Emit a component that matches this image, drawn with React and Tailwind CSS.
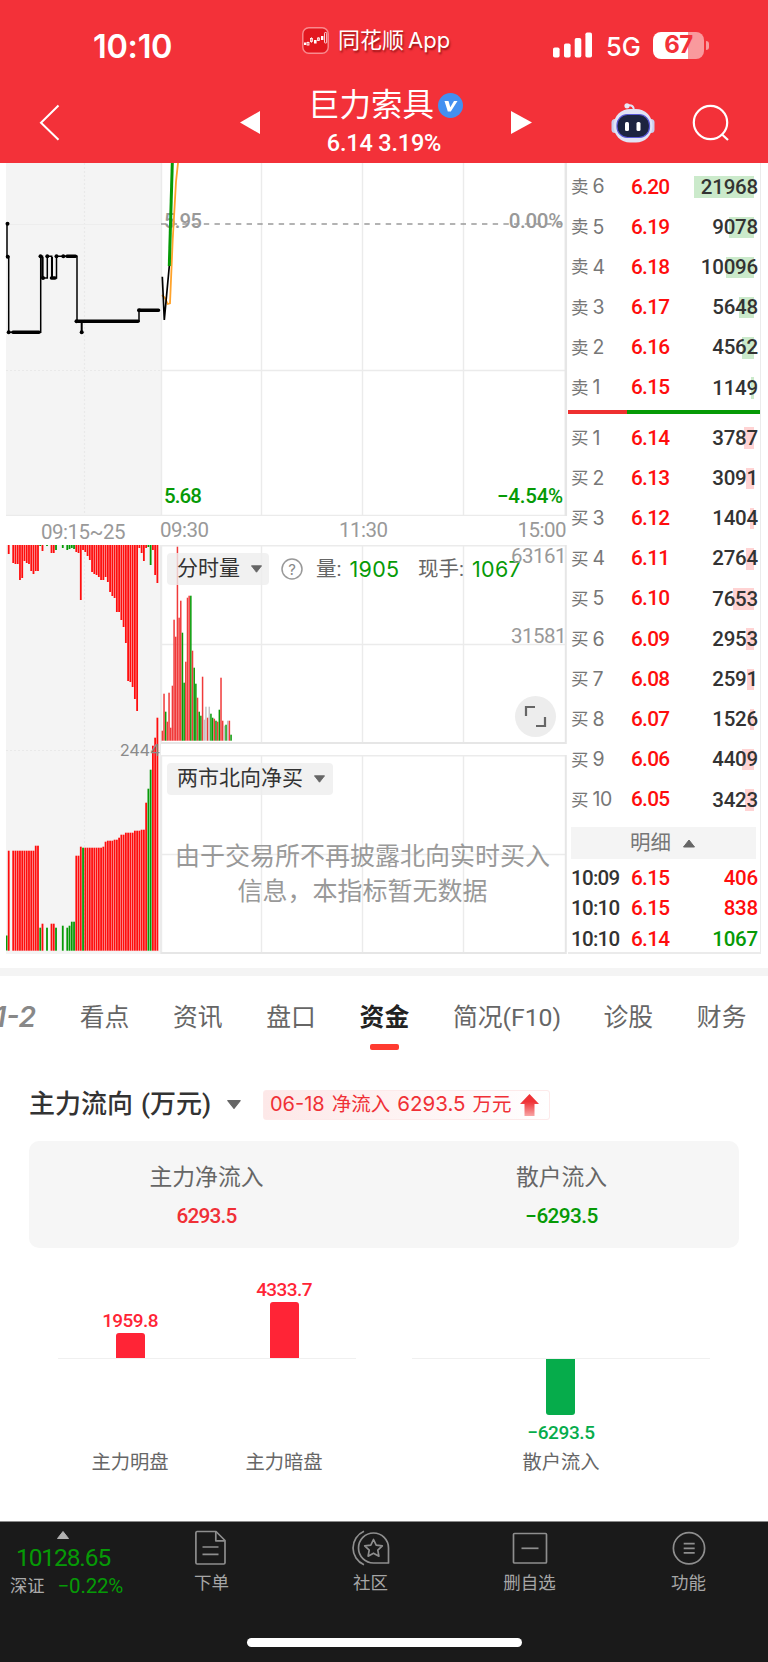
const asks = [
  { label: '卖', level: 6, price: '6.20', qty: 21968 },
  { label: '卖', level: 5, price: '6.19', qty: 9078 },
  { label: '卖', level: 4, price: '6.18', qty: 10096 },
  { label: '卖', level: 3, price: '6.17', qty: 5648 },
  { label: '卖', level: 2, price: '6.16', qty: 4562 },
  { label: '卖', level: 1, price: '6.15', qty: 1149 }
]

const bids = [
  { label: '买', level: 1, price: '6.14', qty: 3787 },
  { label: '买', level: 2, price: '6.13', qty: 3091 },
  { label: '买', level: 3, price: '6.12', qty: 1404 },
  { label: '买', level: 4, price: '6.11', qty: 2764 },
  { label: '买', level: 5, price: '6.10', qty: 7653 },
  { label: '买', level: 6, price: '6.09', qty: 2953 },
  { label: '买', level: 7, price: '6.08', qty: 2591 },
  { label: '买', level: 8, price: '6.07', qty: 1526 },
  { label: '买', level: 9, price: '6.06', qty: 4409 },
  { label: '买', level: 10, price: '6.05', qty: 3423 }
]

const trades = [
  { time: '10:09', price: '6.15', qty: 406, up: true },
  { time: '10:10', price: '6.15', qty: 838, up: true },
  { time: '10:10', price: '6.14', qty: 1067, up: false }
]

const RED = '#ff0d0d'
const GREEN = '#069a06'

// Call auction: [slot, unmatched height, matched height, colour]
const auctionBars = [
  [0, 9, 100, 'r'],
  [2, 18, 100, 'r'], [3, 19, 100, 'r'], [4, 19, 100, 'r'], [5, 35, 100, 'r'],
  [6, 33, 100, 'r'], [7, 16, 100, 'r'], [8, 18, 100, 'r'], [9, 19, 100, 'r'],
  [10, 26, 100, 'r'], [11, 29, 100, 'r'], [12, 26, 105, 'r'], [13, 26, 105, 'r'],
  [14, 1, 23, 'g'], [15, 6, 27, 'r'], [17, 1, 23, 'g'], [19, 8, 27, 'r'],
  [20, 8, 27, 'r'], [21, 5, 23, 'g'], [24, 3, 25, 'g'], [26, 5, 23, 'g'],
  [27, 4, 25, 'g'], [28, 3, 29, 'g'], [29, 4, 29, 'g'], [30, 7, 95, 'r'],
  [31, 8, 95, 'r'], [32, 55, 104, 'r'], [33, 5, 103, 'x'], [34, 7, 103, 'r'],
  [35, 11, 103, 'r'], [36, 15, 103, 'r'], [37, 27, 103, 'r'], [38, 29, 103, 'r'],
  [39, 30, 103, 'r'], [40, 32, 103, 'r'], [41, 35, 103, 'r'], [42, 35, 104, 'r'],
  [43, 32, 109, 'r'], [44, 37, 110, 'r'], [45, 47, 110, 'r'], [46, 51, 110, 'r'],
  [47, 53, 111, 'r'], [48, 67, 111, 'r'], [49, 67, 113, 'r'], [50, 75, 116, 'r'],
  [51, 82, 116, 'r'], [52, 98, 118, 'r'], [53, 136, 118, 'r'], [54, 137, 118, 'r'],
  [55, 142, 118, 'r'], [56, 154, 120, 'r'], [57, 166, 120, 'r'], [58, 3, 120, 'r'],
  [59, 8, 121, 'r'], [60, 16, 121, 'r'], [61, 3, 148, 'r'], [62, 2, 162, 'g'],
  [63, 20, 181, 'g'], [64, 5, 205, 'r'], [65, 30, 213, 'r'], [66, 38, 233, 'r']
]

const volumeBars = [
  [10, 'r'], [47, 'r'], [29, 'g'], [19, 'r'], [48, 'r'], [13, 'r'], [55, 'r'],
  [121, 'r'], [104, 'r'], [194, 'r'], [123, 'r'], [140, 'r'], [108, 'g'], [58, 'g'],
  [79, 'r'], [143, 'r'], [145, 'r'], [145, 'g'], [90, 'r'], [73, 'g'], [57, 'g'],
  [43, 'r'], [29, 'g'], [25, 'g'], [64, 'r'], [21, 'n'], [34, 'n'], [23, 'r'],
  [34, 'n'], [27, 'g'], [23, 'g'], [22, 'r'], [20, 'g'], [19, 'r'], [31, 'g'],
  [63, 'r'], [20, 'r'], [15, 'n'], [16, 'g'], [20, 'n'], [20, 'r'], [6, 'g']
]

const volumeColor = { r: '#f03a3a', g: '#069a06', n: '#c4c4c4' }

const Caret = ({ className }) => (
  <svg viewBox="0 0 12 8" className={className}>
    <path d="M0.5 0.5h11L6 7.5z" fill="currentColor" stroke="currentColor" strokeLinejoin="round" />
  </svg>
)

const StatusBar = () => (
  <div className="flex h-[82px] items-center pl-[93px] pr-[56px] pt-[8px] text-white">
    <div className="w-[209px] pt-[4px] font-['Inter',sans-serif] text-[32.5px] font-semibold tracking-[-0.3px]">10:10</div>
    <div className="flex w-[251px] items-center gap-[9px] pb-[9px]">
      <svg width="27" height="27" viewBox="0 0 27 27">
        <rect x="0.8" y="0.8" width="25.4" height="25.4" rx="6" fill="#e2171f" stroke="#f98a8e" strokeWidth="1.4" />
        <g fill="none" stroke="#fff" strokeWidth="0.8">
          <path d="M6 14.5v4M9.5 10v6M16.5 10v4" opacity="0.7" />
          <rect x="5" y="15.5" width="2" height="2.5" />
          <rect x="8.5" y="11.5" width="2" height="3" />
          <rect x="15.5" y="11" width="2" height="2.5" />
          <rect x="22.5" y="5.5" width="2.2" height="10.5" rx="0.8" />
        </g>
        <path d="M2 15.5h2.2v2.4H2zM12 13h2.6v3.6H12zM19 9h2.4v4H19z" fill="#fff" />
      </svg>
      <span className="whitespace-nowrap text-[22px] [text-shadow:1px_2px_2px_rgba(90,0,0,0.6)]">
        同花顺<span className="ml-[4px] font-['Inter',sans-serif] text-[22px]">App</span>
      </span>
    </div>
    <svg width="40" height="26" viewBox="0 0 40 26" fill="#fff">
      <rect x="0" y="15.5" width="6.6" height="10" rx="1.8" />
      <rect x="11" y="11.5" width="6.6" height="14" rx="1.8" />
      <rect x="21.7" y="6" width="6.6" height="19.5" rx="1.8" />
      <rect x="32.4" y="0.5" width="6.6" height="25" rx="1.8" />
    </svg>
    <span className="ml-[13px] w-[47px] pt-[4px] font-['Inter',sans-serif] text-[25.5px] font-medium">5G</span>
    <div className="flex items-center gap-[2px]">
      <div className="flex h-[27px] w-[51px] items-center justify-center rounded-[8px] bg-linear-to-r from-white from-68% to-[#f99a9d] to-68% font-['Inter',sans-serif] text-[24px] font-bold tracking-[-0.5px] text-[#f33139]">
        67
      </div>
      <div className="h-[9px] w-[3px] rounded-r-full bg-[#f99a9d]"></div>
    </div>
  </div>
)

const Robot = () => (
  <svg width="44" height="42" viewBox="0 0 44 42">
    <path d="M16 3.5c5-1 7 1 7 5" fill="none" stroke="#dfe2f5" strokeWidth="2" />
    <circle cx="16" cy="3.8" r="2.6" fill="#e8eaf8" />
    <rect x="0.5" y="17" width="7" height="14" rx="3.5" fill="#c9cdec" />
    <rect x="36.5" y="17" width="7" height="14" rx="3.5" fill="#c9cdec" />
    <rect x="2.5" y="7" width="39" height="33.5" rx="16.5" fill="#e1e3f5" />
    <rect x="6" y="12.5" width="32.5" height="23" rx="10.5" fill="#1c2340" stroke="#5a58d6" strokeWidth="1.2" />
    <rect x="14" y="20" width="4" height="9" rx="1.5" fill="#fff" />
    <rect x="25.5" y="20" width="4" height="9" rx="1.5" fill="#fff" />
  </svg>
)

const Header = () => (
  <header className="h-[163px] bg-[#f33139] text-white">
    <StatusBar />
    <div className="flex h-[81px] items-center pl-[39px] pr-[38px]">
      <svg width="21" height="37" viewBox="0 0 21 37" className="w-[201px] shrink-0" preserveAspectRatio="xMinYMid">
        <path d="M19.5 1.5L2 18.8l17.5 17" fill="none" stroke="#fff" strokeWidth="2" />
      </svg>
      <svg width="20" height="23" viewBox="0 0 20 23">
        <path d="M20 0v23L0 11.5z" fill="#fff" />
      </svg>
      <div className="flex w-[251px] flex-col items-center">
        <div className="flex h-[42px] items-center gap-[4px]">
          <h1 className="w-[126px] whitespace-nowrap text-[31.5px] font-normal leading-[42px]">巨力索具</h1>
          <svg width="25" height="25" viewBox="0 0 25 25">
            <circle cx="12.5" cy="12.5" r="12.5" fill="#438ff0" />
            <path d="M6.5 8h4l1.8 6.2L16 8h3.5l-6.7 10.5h-3z" fill="#fff" />
          </svg>
        </div>
        <p className="h-[34px] pr-[3px] text-[23.5px] font-medium leading-[32px] tracking-[-0.2px]">6.14 3.19%</p>
      </div>
      <svg width="21" height="23" viewBox="0 0 21 23">
        <path d="M0 0v23l21-11.5z" fill="#fff" />
      </svg>
      <div className="ml-[79px] mr-[37px] shrink-0">
        <Robot />
      </div>
      <svg width="38" height="38" viewBox="0 0 38 38" fill="none" stroke="#fff" strokeWidth="2.2" className="shrink-0">
        <circle cx="18.5" cy="18.5" r="16.7" />
        <path d="M29.5 30l6.5 6" />
      </svg>
    </div>
  </header>
)

const PriceChart = () => (
  <svg width="568" height="353" viewBox="0 0 568 353" className="block">
    <rect x="6" y="0" width="155" height="353" fill="#f4f4f4" />
    <path d="M161.5 0v353M261.5 0v353M362.5 0v353M463.5 0v353M161 207.5h404M6 352.5h560" stroke="#ebebeb" strokeWidth="1.4" fill="none" />
    <path d="M565.8 0v353" stroke="#e6e6e6" strokeWidth="2.5" />
    <path d="M84.5 0v352M6 207.5h154" stroke="#e9e9e9" strokeWidth="1.2" strokeDasharray="2 2" fill="none" />
    <path d="M6 61.5h154" stroke="#ededed" />
    {/* previous close */}
    <path d="M161 61H563" stroke="#9a9a9a" strokeWidth="1.7" strokeDasharray="5.4 5.3" />
    <g className="text-[20.5px] font-medium">
      <text x="164" y="65" fill="#999" className="tracking-[-0.9px]">5.95</text>
      <text x="563" y="65" fill="#999" textAnchor="end" className="tracking-[-0.3px]">0.00%</text>
      <text x="164" y="340" fill={GREEN} className="tracking-[-0.9px]">5.68</text>
      <text x="563" y="340" fill={GREEN} textAnchor="end" className="tracking-[-0.2px]">−4.54%</text>
    </g>
    <g fill="none" stroke="#000">
      <path d="M7 60.7V93.7H8.7V169.3H40.7V93.3H42.5V115H47.3V93.3H51.7V115H56.5V93.3H77V158.3H139V147.3H159" strokeWidth="1.5" />
      <path d="M81.7 158.3V169.3M42.5 94v21M52 94v20" strokeWidth="2" />
      <path d="M13 169.3H39M67 93.3H75.5M78 158.3H138M140 147.3H158.5M51.5 115H55" strokeWidth="3.6" strokeLinecap="round" />
    </g>
    {[[7.5, 60.7], [7.7, 93.7], [8.7, 169.3], [40.5, 93.3], [43, 115], [47.3, 93.3], [56.5, 93.3], [63.3, 93.3], [81.7, 169.3], [76.5, 158.3], [139, 147.3]].map(([x, y]) => (
      <circle key={`${x}-${y}`} cx={x} cy={y} r="2" fill="#000" />
    ))}
    <path d="M162 132L165 135L167.7 141L170 140.3L172.7 77L176 18.7L178 0" fill="none" stroke="#ffa32b" strokeWidth="1.8" />
    <path d="M162.3 113.7L164.3 157L169.3 103" fill="none" stroke="#000" strokeWidth="1.7" />
    <path d="M169.3 103L172.3 0" stroke={GREEN} strokeWidth="3" />
  </svg>
)

const AuctionChart = () => (
  <svg width="161" height="410" viewBox="0 0 161 410" className="block shrink-0">
    <rect x="6" y="0" width="155" height="409" fill="#f4f4f4" />
    <path d="M84.5 0v408M6 205.5h154" stroke="#e9e9e9" strokeWidth="1.2" strokeDasharray="2 2" fill="none" />
    <rect x="6" y="390.5" width="1.5" height="15" fill={GREEN} />
    {auctionBars.map(([slot, top, bottom, c]) => (
      <g key={slot}>
        <rect x={7.8 + slot * 2.253} y="0" width="1.8" height={top} fill={c === 'g' ? GREEN : RED} />
        <rect x={7.8 + slot * 2.253} y={405.7 - bottom} width="1.8" height={bottom} fill={c === 'r' ? RED : GREEN} />
      </g>
    ))}
    <text x="160" y="211" textAnchor="end" fill="#8a8a8a" className="font-['Inter',sans-serif] text-[16.5px] tracking-[-0.4px]">2444</text>
    <path d="M160.5 0v409" stroke="#ebebeb" />
  </svg>
)

const Grid = ({ bars = [] }) => (
  <svg width="407" height="199" viewBox="0 0 407 199" className="block">
    <path d="M0 .7h405M.5 0v199M100.5 0v199M201.5 0v199M302.5 0v199M0 99.5h405" stroke="#ebebeb" strokeWidth="1.4" fill="none" />
    <path d="M404.8 0v199M0 198h405" stroke="#e6e6e6" strokeWidth="2" fill="none" />
    {bars.map(([h, c], i) => (
      <rect key={i} x={0.6 + i * 1.676} y={195.7 - h} width="1.5" height={h} fill={volumeColor[c]} />
    ))}
  </svg>
)

const VolumePane = () => (
  <div className="relative h-[199px]">
    <Grid bars={volumeBars} />
    <div className="absolute left-[6px] top-[8px] flex items-center">
      <div className="flex h-[32px] w-[102px] items-center gap-[11px] rounded-[4px] bg-[#eeeeee]/80 pl-[10px] text-[21px] text-[#333]">
        分时量
        <Caret className="h-[8px] w-[11px] text-[#666]" />
      </div>
      <svg width="22" height="22" viewBox="0 0 22 22" className="ml-[12px]">
        <circle cx="11" cy="11" r="10" fill="none" stroke="#999" strokeWidth="1.5" />
        <text x="11" y="16.5" textAnchor="middle" fill="#888" className="font-['Inter',sans-serif] text-[15px]">?</text>
      </svg>
      <div className="ml-[13px] flex w-[102px] items-center whitespace-nowrap text-[20.5px] text-[#666]">
        量:
        <span className="ml-[8px] font-['Inter',sans-serif] text-[21.5px] tracking-[0.3px] text-[#069a06]">1905</span>
      </div>
      <div className="flex items-center whitespace-nowrap text-[20.5px] text-[#666]">
        现手:
        <span className="ml-[8px] font-['Inter',sans-serif] text-[21.5px] tracking-[0.3px] text-[#069a06]">1067</span>
      </div>
    </div>
    <span className="absolute right-[2px] top-0 text-[20.5px] leading-[22px] tracking-[-0.5px] text-[#999]">63161</span>
    <span className="absolute right-[2px] top-[79px] text-[20.5px] leading-[24px] tracking-[-0.5px] text-[#999]">31581</span>
    <button className="absolute left-[354px] top-[151px] flex h-[41px] w-[41px] items-center justify-center rounded-full bg-[#ededed]">
      <svg width="23" height="23" viewBox="0 0 23 23" fill="none" stroke="#666" strokeWidth="2.2">
        <path d="M2 11V2h9M21 12v9h-9" />
      </svg>
    </button>
  </div>
)

const NorthboundPane = () => (
  <div className="relative h-[199px]">
    <Grid />
    <div className="absolute left-[6px] top-[8px] flex h-[32px] w-[166px] items-center gap-[11px] rounded-[4px] bg-[#eeeeee]/80 pl-[10px] text-[21px] text-[#333]">
      两市北向净买
      <Caret className="h-[8px] w-[11px] text-[#666]" />
    </div>
    <p className="absolute left-0 top-[84px] w-[403px] text-center text-[25px] leading-[35px] text-[#999]">
      由于交易所不再披露北向实时买入
      <br />
      信息，本指标暂无数据
    </p>
  </div>
)

const TimeAxis = () => (
  <div className="flex h-[29px] items-center text-[20.5px] tracking-[-0.5px] text-[#999]">
    <span className="w-[160px] pl-[41px] pt-[3px]">09:15~25</span>
    <span className="w-[179px]">09:30</span>
    <span>11:30</span>
    <span className="ml-auto pr-[2px]">15:00</span>
  </div>
)

const OrderRow = ({ order, side }) => (
  <div className="relative flex h-[40.2px] items-center pl-[3px] pr-[2px]">
    <span
      className={side === 'ask' ? 'absolute right-[6px] h-[21.5px] bg-[#cbeacb]' : 'absolute right-[6px] h-[21.5px] bg-[#ffd3d3]'}
      style={{ width: (order.qty / 21968) * 60 }}
    ></span>
    <span className="flex w-[60px] items-center gap-[4px] text-[17.5px] text-[#777]">
      {order.label}
      <span className="font-['Inter',sans-serif] text-[19.5px] tracking-[-0.5px]">{order.level}</span>
    </span>
    <span className="text-[20.8px] font-medium tracking-[-0.7px] text-[#ff0d0d]">{order.price}</span>
    <span className="relative ml-auto text-[20.5px] font-medium tracking-[-0.2px] text-[#333]">{order.qty}</span>
  </div>
)

const OrderBook = () => (
  <div className="h-[791px] w-[193px] border-b-2 border-r border-[#ebebeb] pt-[4px]">
    {asks.map((o) => <OrderRow key={o.level} order={o} side="ask" />)}
    <div className="mt-[2px] mb-[4px] flex h-[4px]">
      <div className="w-[59px] bg-[#ee3030]"></div>
      <div className="flex-1 bg-[#069a06]"></div>
    </div>
    {bids.map((o) => <OrderRow key={o.level} order={o} side="bid" />)}
    <div className="ml-[3px] mt-[7px] mb-[4px] flex h-[32px] w-[185px] items-center gap-[12px] bg-[#f4f4f4] pl-[59px] pt-px text-[20.5px] text-[#777]">
      明细
      <Caret className="h-[9px] w-[12px] rotate-180 text-[#666]" />
    </div>
    {trades.map((t, i) => (
      <div key={i} className="flex h-[30.5px] items-center pl-[3px] pr-[2px] text-[20.5px] font-medium tracking-[-0.2px]">
        <span className="w-[60px] tracking-[-0.7px] text-[#333]">{t.time}</span>
        <span className="text-[20.8px] tracking-[-0.7px] text-[#ff0d0d]">{t.price}</span>
        <span className={t.up ? 'ml-auto text-[#ff0d0d]' : 'ml-auto text-[#069a06]'}>{t.qty}</span>
      </div>
    ))}
  </div>
)

const Tabs = () => (
  <nav className="flex h-[80px] gap-[43.7px] overflow-hidden whitespace-nowrap text-[24.8px] leading-[83px] text-[#666]">
    <span className="-ml-[14px] flex w-[50px] shrink-0 justify-end font-['Inter',sans-serif] text-[28px] font-semibold italic text-[#888]">1-2</span>
    <span>看点</span>
    <span>资讯</span>
    <span>盘口</span>
    <span className="relative h-[80px] font-bold text-[#222]">
      资金
      <i className="absolute bottom-[6px] left-[10px] h-[6px] w-[29px] rounded-[2px] bg-[#ff3b30]"></i>
    </span>
    <span className="w-[107px] shrink-0">简况(F10)</span>
    <span>诊股</span>
    <span>财务</span>
  </nav>
)

const FlowBar = ({ label, value, height, up }) => (
  <div className="flex w-[154px] flex-col items-center text-[19px]">
    <div className="flex h-[80px] flex-col items-center justify-end">
      {up && (
        <>
          <span className="leading-[24px] font-medium tracking-[-0.6px] text-[#ff2436]">{value}</span>
          <div className="w-[29px] rounded-t-[3px] bg-[#ff2436]" style={{ height }}></div>
        </>
      )}
    </div>
    <div className="flex h-[90px] flex-col items-center">
      {!up && (
        <>
          <div className="w-[29px] rounded-b-[3px] bg-[#06ac4b]" style={{ height }}></div>
          <span className="mt-[6px] leading-[24px] font-medium text-[#06ac4b] tracking-[-0.4px]">{value}</span>
        </>
      )}
    </div>
    <span className="text-[19.3px] leading-[30px] text-[#666]">{label}</span>
  </div>
)

const CapitalFlow = () => (
  <section className="px-[29px]">
    <div className="flex h-[85px] items-center pt-[12px]">
      <h2 className="whitespace-nowrap text-[26px] font-medium text-[#333]">主力流向<span className="ml-[8px]">(万元)</span></h2>
      <Caret className="ml-[16px] h-[9px] w-[14px] text-[#666]" />
      <div className="ml-auto mr-[189px] flex h-[30px] w-[287px] items-center justify-between rounded-[3px] border border-[#fdeaea] bg-linear-to-r from-[#fde8e8] to-white pl-[6px] pr-[10px] text-[#f03036]">
        <span className="whitespace-nowrap text-[19.5px]">
          <span className="font-['Inter',sans-serif] text-[20px]">06-18</span>
          <span className="mx-[7px]">净流入</span>
          <span className="font-['Inter',sans-serif] text-[20.5px]">6293.5</span>
          <span className="ml-[7px]">万元</span>
        </span>
        <svg width="19" height="22" viewBox="0 0 19 22">
          <defs>
            <linearGradient id="up" x1="0" y1="0" x2="0" y2="1">
              <stop offset="0.35" stopColor="#ef3236" />
              <stop offset="1" stopColor="#f8a5a5" />
            </linearGradient>
          </defs>
          <path d="M9.5 0L19 10h-4.5v12h-10V10H0z" fill="url(#up)" />
        </svg>
      </div>
    </div>
    <div className="grid h-[107px] grid-cols-2 rounded-[10px] bg-[#f6f6f6] pt-[19px] text-center">
      <div>
        <p className="text-[22.8px] leading-[36px] text-[#666]">主力净流入</p>
        <p className="text-[20.8px] font-medium leading-[40px] tracking-[-0.8px] text-[#f03036]">6293.5</p>
      </div>
      <div>
        <p className="text-[22.8px] leading-[36px] text-[#666]">散户流入</p>
        <p className="text-[20.8px] font-medium leading-[40px] tracking-[-0.6px] text-[#069a06]">−6293.5</p>
      </div>
    </div>
    <div className="flex justify-between px-[29px] pt-[30px]">
      <div className="relative flex h-[200px] w-[298px]">
        <div className="absolute left-0 top-[80px] h-px w-full bg-[#f0f0f0]"></div>
        <div className="-ml-[5px] flex">
          <FlowBar label="主力明盘" value="1959.8" height={25} up />
          <FlowBar label="主力暗盘" value="4333.7" height={57} up />
        </div>
      </div>
      <div className="relative flex h-[200px] w-[298px] justify-center">
        <div className="absolute left-0 top-[80px] h-px w-full bg-[#f0f0f0]"></div>
        <FlowBar label="散户流入" value="−6293.5" height={57} />
      </div>
    </div>
  </section>
)

const DocIcon = () => (
  <svg width="34" height="36" viewBox="0 0 34 36" fill="none" stroke="#8e8e8e" strokeWidth="1.7" strokeLinejoin="round">
    <path d="M21 1.5H2A1.3 1.3 0 0 0 .9 2.8v30A1.3 1.3 0 0 0 2.2 34h26.5a1.3 1.3 0 0 0 1.3-1.3V10.5z" />
    <path d="M20.8 1.5v9.3h9M7.5 17h16M7.5 24.3h16" />
  </svg>
)

const CommunityIcon = () => (
  <svg width="38" height="36" viewBox="0 0 38 36" fill="none" stroke="#8e8e8e" strokeWidth="1.7" strokeLinejoin="round">
    <path d="M36.5 33V18A15 15 0 1 0 21.5 33z" />
    <path d="M12 1.3a18.2 18.2 0 0 0 0 33.4" />
    <path d="M21.5 9.5l2.7 5.6 6.1.8-4.5 4.2 1.1 6.1-5.4-3-5.4 3 1.1-6.1-4.5-4.2 6.1-.8z" />
  </svg>
)

const RemoveIcon = () => (
  <svg width="36" height="36" viewBox="0 0 36 36" fill="none" stroke="#8e8e8e" strokeWidth="1.7" strokeLinejoin="round">
    <rect x="1.5" y="3.5" width="33" height="29.5" rx="1" />
    <path d="M9.5 18.3h17" />
  </svg>
)

const MenuIcon = () => (
  <svg width="34" height="36" viewBox="0 0 34 36" fill="none" stroke="#8e8e8e" strokeWidth="1.7">
    <circle cx="17" cy="18.3" r="15.6" />
    <path d="M11.7 13.7h11M11.7 18.3h11M11.7 22.9h11" />
  </svg>
)

const navItems = [
  { label: '下单', Icon: DocIcon },
  { label: '社区', Icon: CommunityIcon },
  { label: '删自选', Icon: RemoveIcon },
  { label: '功能', Icon: MenuIcon }
]

const BottomNav = () => (
  <footer className="h-[141px] border-t border-[#8a8a8a] bg-[#1a1a1a]">
    <div className="flex h-[116px]">
      <div className="w-[132px] pt-[9px]">
        <Caret className="ml-[55px] block h-[8px] w-[16px] rotate-180 text-[#b0b0b0]" />
        <div className="ml-[16px] mt-[2px] text-[24.5px] leading-[34px] tracking-[-1.1px] text-[#069a06]">10128.65</div>
        <div className="flex items-center whitespace-nowrap pl-[10px] leading-[22px]">
          <span className="text-[17.3px] text-[#aaa]">深证</span>
          <span className="ml-[13px] text-[20.5px] tracking-[-0.2px] text-[#069a06]">−0.22%</span>
        </div>
      </div>
      {navItems.map(({ label, Icon }) => (
        <div key={label} className="flex w-[159px] flex-col items-center pt-[8px]">
          <Icon />
          <span className="mt-[4px] text-[17.5px] leading-[26px] text-[#a6a6a6]">{label}</span>
        </div>
      ))}
    </div>
    <div className="mx-auto h-[9px] w-[275px] rounded-full bg-white"></div>
  </footer>
)

const App = () => {
  return (
    <div className="h-[1662px] w-[768px] overflow-hidden bg-white font-['Roboto','Noto_Sans_CJK_SC',sans-serif]">
      <Header />
      <main className="h-[1358px]">
        <div className="flex h-[805px]">
          <div className="w-[568px]">
            <PriceChart />
            <TimeAxis />
            <div className="flex">
              <AuctionChart />
              <div className="flex flex-col gap-[11px]">
                <VolumePane />
                <NorthboundPane />
              </div>
            </div>
          </div>
          <OrderBook />
        </div>
        <div className="h-[8px] bg-[#f4f4f4]"></div>
        <Tabs />
        <CapitalFlow />
      </main>
      <BottomNav />
    </div>
  )
}

export default App
